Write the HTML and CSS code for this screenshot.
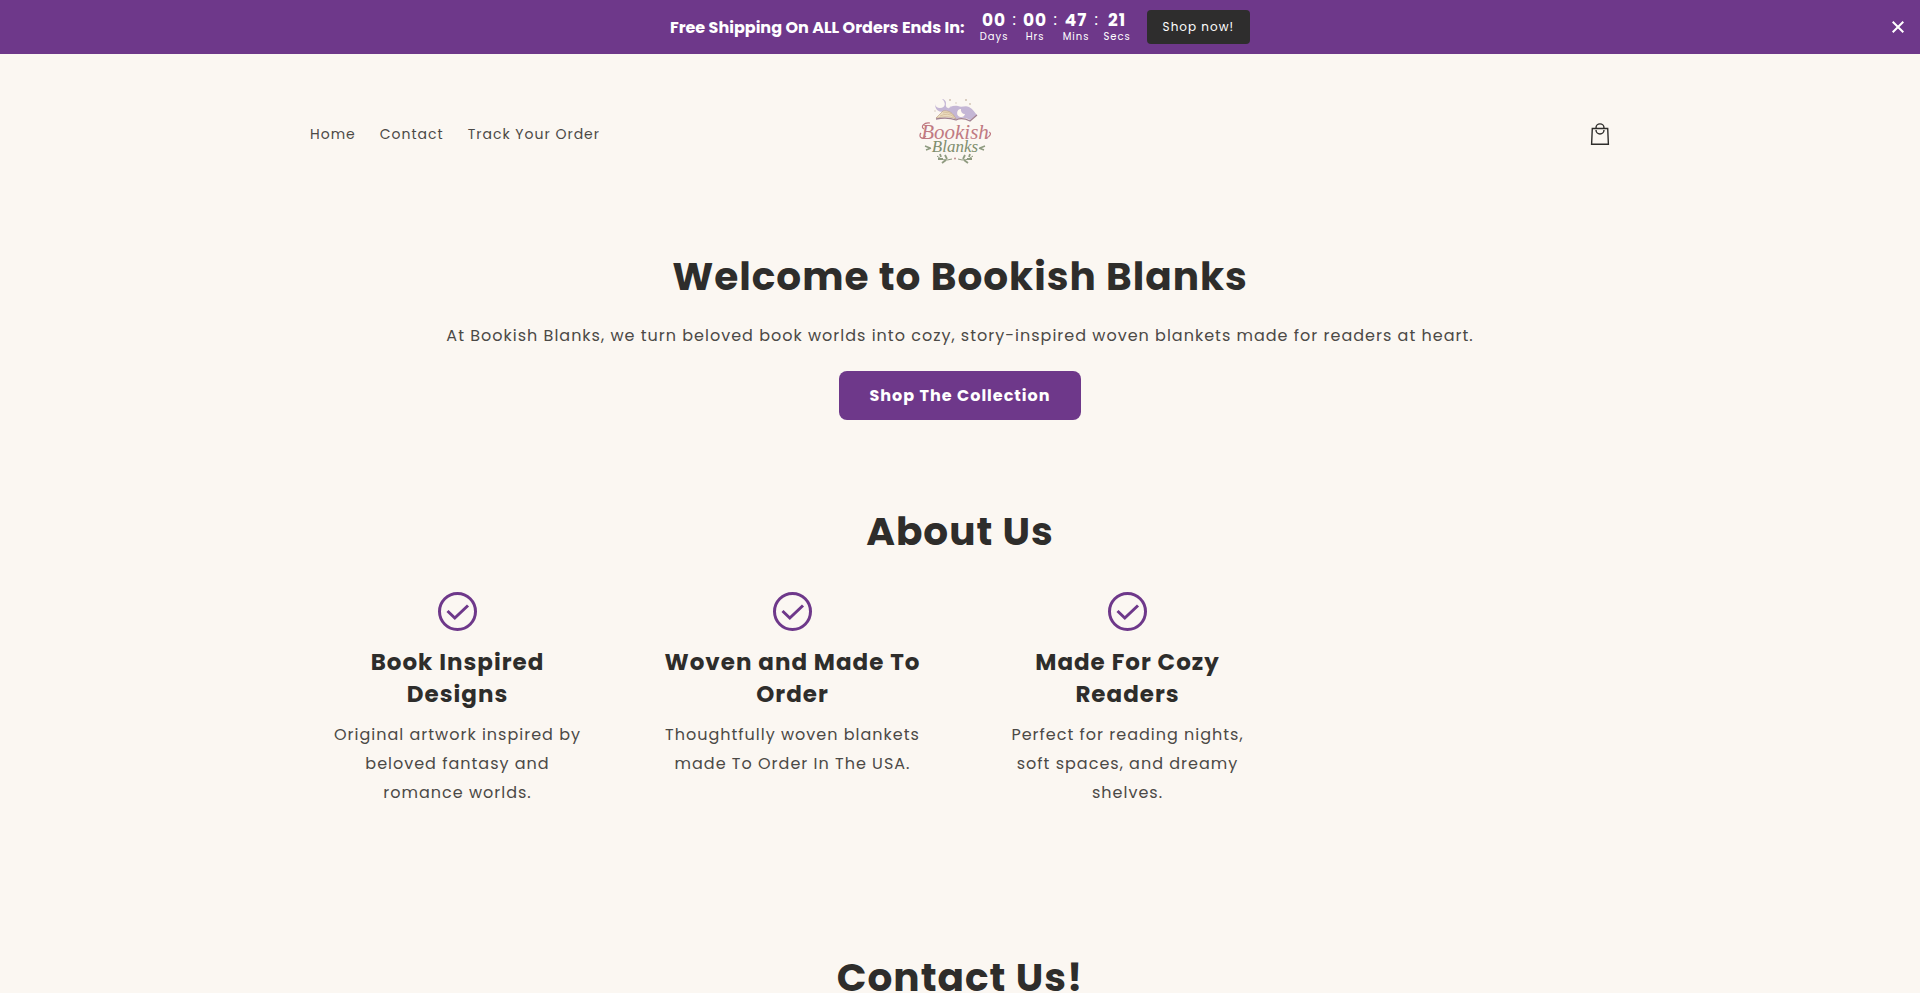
FILE: index.html
```html
<!DOCTYPE html>
<html lang="en">
<head>
<meta charset="utf-8">
<meta name="viewport" content="width=device-width, initial-scale=1">
<title>Bookish Blanks</title>
<link rel="stylesheet" href="styles.css">
</head>
<body>
<svg class="defs" aria-hidden="true">
  <symbol id="check" viewBox="0 0 40 40">
    <circle cx="19.500" cy="20.500" r="18" fill="none" stroke="currentColor" stroke-width="3"/>
    <path d="M9.500 20 L16.800 27 L30 14.500" fill="none" stroke="currentColor" stroke-width="3"/>
  </symbol>
</svg>
<aside class="banner">
  <p class="banner-text">Free Shipping On ALL Orders Ends In:</p>
  <div class="timer">
    <div class="unit"><b>00</b><span>Days</span></div>
    <i>:</i>
    <div class="unit"><b>00</b><span>Hrs</span></div>
    <i>:</i>
    <div class="unit"><b>47</b><span>Mins</span></div>
    <i>:</i>
    <div class="unit"><b>21</b><span>Secs</span></div>
  </div>
  <a class="banner-btn" href="#">Shop now!</a>
  <button class="close" type="button" aria-label="Close">
    <svg width="12" height="12" viewBox="0 0 12 12"><path d="M.7.7 11.300 11.300M11.300.7.7 11.300" stroke="currentColor" stroke-width="2"/></svg>
  </button>
</aside>
<header class="header page">
  <nav class="nav">
    <a href="#">Home</a>
    <a href="#">Contact</a>
    <a href="#">Track Your Order</a>
  </nav>
  <a class="logo" href="#" aria-label="Bookish Blanks">
    <svg width="90" height="76" viewBox="0 0 90 76">
      <path d="M27 3 C31 6 31 12 25 12 C22 12 20 10 20 8 C20 13 23 16 28 16 C33 16 33 11 37 10 C35 12 30 14 31 7 C31 5 29 3 27 3Z" fill="#c4b6d5"/>
      <path d="M31 15 C34 11 38 9 43 10 C47 12 50 9 54 11 C58 13 60 17 62 19 L55 24 C50 21 45 21 40 24 C38 20 35 17 31 15Z" fill="#c4b6d5"/>
      <path d="M21 22 L28 15 C34 14 38 17 41 23 C35 20 28 21 21 22Z" fill="#ecdcbf" stroke="#b99c7e" stroke-width=".6"/>
      <path d="M25 20 Q33 16 39 21 M28 17 Q34 15 39 20" fill="none" stroke="#cdb491" stroke-width=".6"/>
      <path d="M21 23 Q33 21 41 24 Q47 21 55 25 L62 19" fill="none" stroke="#a18191" stroke-width="1.300"/>
      <path d="M46 13 A4 4 0 1 0 50 18 A4 4 0 0 1 46 13Z" fill="#fff9f1"/>
      <g fill="#cfc0b0"><circle cx="35" cy="4" r="1"/><circle cx="41" cy="7" r=".7"/><circle cx="51" cy="4" r="1"/><circle cx="55" cy="8" r=".9"/><circle cx="20" cy="15" r=".7"/></g>
      <text class="logo-main" x="40" y="43">Bookish</text>
      <path d="M11 40 C7 45 3 40 6 37 M9 33 C5 31 9 26 15 27 M71 42 C75 41 77 37 74 36" fill="none" stroke="#bd7780" stroke-width="1.200"/>
      <text class="logo-sub" x="40" y="56">Blanks</text>
      <g fill="none" stroke="#8f9b80" stroke-width="1.400">
        <path d="M10 50 l5 2 M11 54 l5 -2 M70 50 l-5 2 M69 54 l-5 -2"/>
        <path d="M37 63 Q28 66 22 60 M43 63 Q51 66 58 60" stroke-width="1"/>
        <path d="M32 63 l-2 -4 M28 63 l-5 0 M26 61 l-1 -3 M31 64 l-4 3 M48 63 l2 -4 M52 63 l5 0 M54 61 l1 -3 M49 64 l4 3" stroke-width="1.800"/>
      </g>
      <circle cx="40" cy="62.500" r="1" fill="#bd8b89"/>
    </svg>
  </a>
  <a class="cart" href="#" aria-label="Cart">
    <svg width="44" height="44" viewBox="0 0 44 44" fill="none" stroke="currentColor" stroke-width="1.400"><path d="M14.300 16.500H29.700L30.400 32.300H13.600Z M18 16.500v-.6a4 4 0 0 1 8 0v.6 M18 18a4 4 0 0 0 8 0"/></svg>
  </a>
</header>
<main>
  <section class="hero page">
    <h1>Welcome to Bookish Blanks</h1>
    <p>At Bookish Blanks, we turn beloved book worlds into cozy, story-inspired woven blankets made for readers at heart.</p>
    <a class="cta" href="#">Shop The Collection</a>
  </section>
  <section class="about page">
    <h2>About Us</h2>
    <div class="cards">
      <article class="card"><svg class="tick"><use href="#check"/></svg><h3>Book Inspired Designs</h3><p>Original artwork inspired by beloved fantasy and romance worlds.</p></article>
      <article class="card"><svg class="tick"><use href="#check"/></svg><h3>Woven and Made To Order</h3><p>Thoughtfully woven blankets made To Order In The USA.</p></article>
      <article class="card"><svg class="tick"><use href="#check"/></svg><h3>Made For Cozy Readers</h3><p>Perfect for reading nights, soft spaces, and dreamy shelves.</p></article>
    </div>
  </section>
  <section class="contact page">
    <h2>Contact Us!</h2>
  </section>
</main>
</body>
</html>
```
FILE: styles.css
```css
* { box-sizing: border-box; }
body {
  margin: 0;
  background: #fbf7f2;
  color: #4b4946;
  font: 16px/29px Poppins, Inter, sans-serif;
  letter-spacing: 1px;
}
h1, h2, h3, p { margin: 0; }
h1, h2, h3 { color: #2e2d2b; font-weight: 700; }
h1, h2 { font-size: 39px; line-height: 52px; }
a { color: inherit; text-decoration: none; }
.defs { position: absolute; width: 0; height: 0; }
.page { width: 100%; max-width: 1400px; margin: 0 auto; padding: 0 50px; }

.banner {
  position: relative;
  display: flex;
  align-items: center;
  justify-content: center;
  gap: 15px;
  min-height: 54px;
  background: #6e388a;
  color: #fff;
}
.banner-text { font-weight: 700; letter-spacing: 0; }
.timer { display: flex; padding-top: 1px; }
.unit { display: flex; flex-direction: column; align-items: center; min-width: 29px; }
.unit b { font-size: 17px; line-height: 17px; }
.unit span { font-size: 10px; line-height: 15px; }
.timer i { width: 12px; font-style: normal; line-height: 16px; text-align: center; }
.banner-btn {
  padding: 0 16px;
  border-radius: 4px;
  background: #2e2d2d;
  font-size: 12px;
  line-height: 34px;
}
.close {
  position: absolute;
  right: 10px;
  top: 15px;
  display: grid;
  place-items: center;
  width: 24px;
  height: 24px;
  padding: 0;
  border: 0;
  background: none;
  color: #fff;
}

.header {
  display: grid;
  grid-template-columns: 1fr auto 1fr;
  align-items: center;
  min-height: 160px;
}
.nav { display: flex; gap: 24px; font-size: 14px; }
.logo { display: block; line-height: 0; }
.logo text { font-family: "Liberation Serif", serif; font-style: italic; letter-spacing: 0; text-anchor: middle; }
.logo-main { font-size: 21px; fill: #c07a82; }
.logo-sub { font-size: 17px; fill: #7f8e6e; }
.cart { justify-self: end; margin-right: -12px; line-height: 0; color: #2e2d2b; }

.hero {
  display: flex;
  flex-direction: column;
  align-items: center;
  padding-top: 37px;
  text-align: center;
}
.hero p { margin: 18px 0 21px; }
.cta {
  padding: 10px 30px;
  border-radius: 8px;
  background: #6e388a;
  color: #fff;
  font-weight: 700;
}
.about { padding-top: 86px; text-align: center; }
.cards { display: grid; grid-template-columns: repeat(4, 1fr); gap: 40px; margin-top: 33px; }
.card { padding: 0 16px; }
.tick { display: block; width: 40px; height: 40px; margin: 0 auto 15px; color: #6e388a; }
.card h3 { margin-bottom: 10px; font-size: 23px; line-height: 32px; }
.contact { padding-top: 145px; text-align: center; }
```
